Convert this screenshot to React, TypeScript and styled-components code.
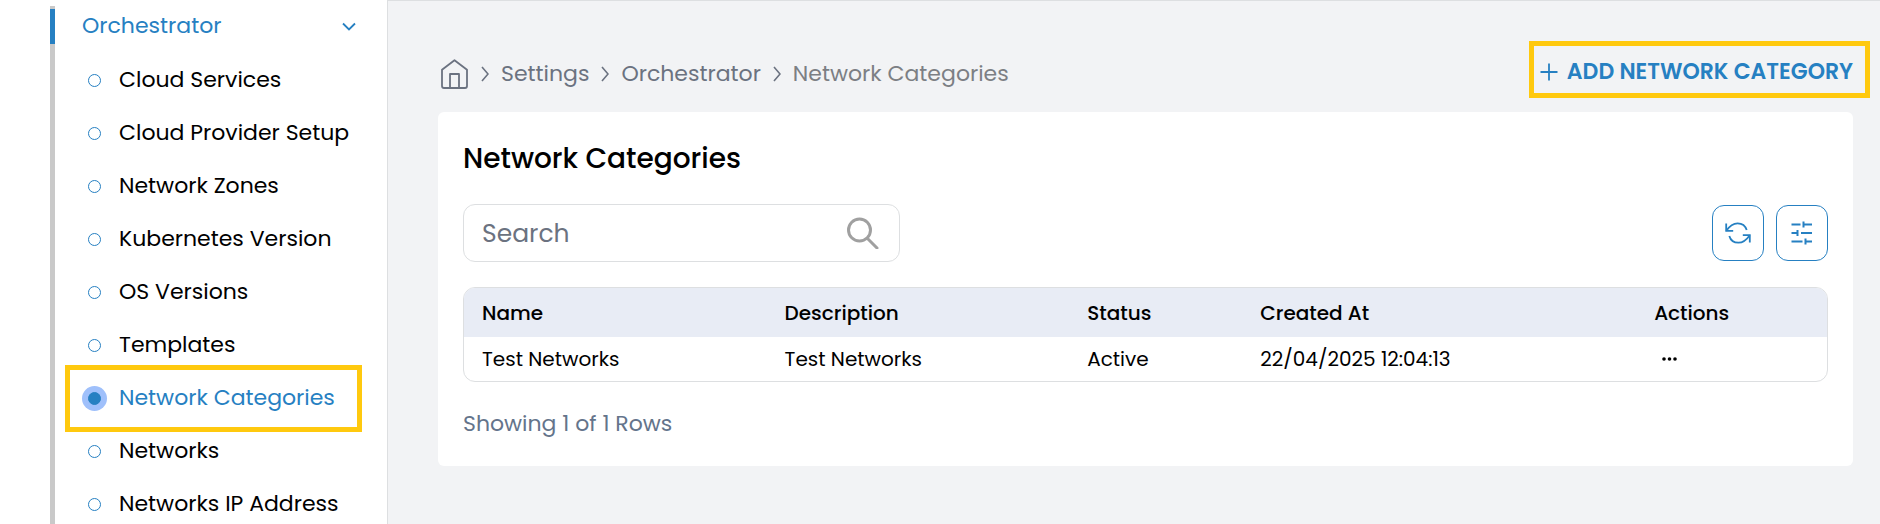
import React from "react";
import styled, { createGlobalStyle, css } from "styled-components";

const blue = "#2680c2";
const slate = "#6b7280";
const line = "#dddfe1";
const marker = "#ffc90e";

const GlobalStyle = createGlobalStyle`
  *, *::before, *::after { box-sizing: border-box; }
  body {
    margin: 0;
    background: #fff;
    color: #000;
    font-family: Poppins, Inter, "Liberation Sans", sans-serif;
    font-size: 22px;
    line-height: 26px;
  }
  a { color: inherit; text-decoration: none; }
  button, input { font: inherit; color: inherit; }
  button { padding: 0; border: 0; background: none; cursor: pointer; }
  svg { display: block; flex: none; fill: none; stroke: currentColor; }
`;

const Shell = styled.div`
  display: flex;
  min-height: 100vh;
`;

const Sidebar = styled.aside`
  display: flex;
  flex: none;
  width: 388px;
  padding: 6px 31px 0 50px;
  border-right: 1px solid ${line};
`;

const Rail = styled.div`
  flex: none;
  width: 5px;
  padding-top: 3px;
  background: #c9c9c9;
`;

const RailThumb = styled.div`
  height: 35px;
  background: ${blue};
`;

const Nav = styled.nav`
  flex: 1;
  padding: 7px 0 0 27px;
`;

const GroupToggle = styled.button`
  display: flex;
  align-items: center;
  justify-content: space-between;
  width: 100%;
  color: ${blue};
`;

const NavList = styled.ul`
  display: flex;
  flex-direction: column;
  gap: 27px;
  margin: 28px 0 0;
  padding: 0;
  list-style: none;
`;

const outlined = css`
  &::after {
    content: "";
    position: absolute;
    inset: -20px 6px -21px -17px;
    border: 5px solid ${marker};
    pointer-events: none;
  }
`;

const NavItem = styled.li<{ $active?: boolean }>`
  position: relative;
  margin-right: -12px;
  ${(p) => p.$active && outlined}
`;

const NavLink = styled.a<{ $active?: boolean }>`
  display: flex;
  align-items: center;
  gap: 12px;
  white-space: nowrap;
  color: ${(p) => (p.$active ? blue : "#000")};
`;

const Bullet = styled.span<{ $active?: boolean }>`
  flex: none;
  width: 13px;
  height: 13px;
  margin: 0 6px;
  border: 1px solid ${blue};
  border-radius: 50%;
  ${(p) =>
    p.$active &&
    css`
      background: ${blue};
      box-shadow: 0 0 0 6px #9fc0fb;
    `}
`;

const Main = styled.main`
  flex: 1;
  min-width: 0;
  padding: 40px 27px 58px 50px;
  border-top: 1px solid ${line};
  background: #f2f3f5;
`;

const TopBar = styled.header`
  display: flex;
  align-items: flex-start;
  justify-content: space-between;
  height: 71px;
`;

const Breadcrumbs = styled.nav`
  display: flex;
  align-items: center;
  gap: 12px;
  padding: 18px 0 0 3px;
  color: ${slate};
`;

const Current = styled.span`
  color: #7c7f84;
`;

const AddButton = styled.button`
  display: flex;
  align-items: center;
  gap: 9px;
  height: 57px;
  margin-right: -17px;
  padding: 4px 12px 0 6px;
  border: 5px solid ${marker};
  color: ${blue};
  font-weight: 600;
  white-space: nowrap;
`;

const Card = styled.section`
  padding: 29px 25px 29px;
  border-radius: 6px;
  background: #fff;
`;

const Title = styled.h1`
  margin: 0;
  font-size: 28px;
  line-height: 36px;
  font-weight: 500;
`;

const Toolbar = styled.div`
  display: flex;
  align-items: center;
  justify-content: space-between;
  margin: 27px 0 25px;
`;

const SearchBox = styled.label`
  display: flex;
  align-items: center;
  width: 32%;
  height: 58px;
  padding: 0 20px 0 18px;
  border: 1px solid ${line};
  border-radius: 12px;
  color: #a0a0a0;
`;

const SearchInput = styled.input`
  flex: 1;
  min-width: 0;
  padding: 2px 0 0;
  border: 0;
  outline: 0;
  background: none;
  color: #000;
  font-size: 25px;
  line-height: 36px;
  &::placeholder { color: ${slate}; opacity: 1; }
`;

const ToolButtons = styled.div`
  display: flex;
  gap: 12px;
`;

const ToolButton = styled.button`
  display: grid;
  place-items: center;
  width: 52px;
  height: 56px;
  border: 1px solid ${blue};
  border-radius: 12px;
  color: ${blue};
`;

const TableFrame = styled.div`
  overflow: hidden;
  border: 1px solid ${line};
  border-radius: 12px;
`;

const Table = styled.table`
  width: 100%;
  table-layout: fixed;
  border-collapse: collapse;
  font-size: 20px;
  text-align: left;
  white-space: nowrap;
`;

const HeadCell = styled.th<{ $share: string }>`
  width: ${(p) => p.$share};
  height: 49px;
  padding: 0 0 0 18px;
  background: #e8ecf5;
  font-weight: 500;
`;

const Cell = styled.td`
  height: 44px;
  padding: 0 0 0 18px;
`;

const MoreButton = styled.button`
  display: block;
  padding: 8px;
`;

const RowCount = styled.p`
  margin: 29px 0 0;
  color: #64748b;
`;

const HomeIcon = () => (
  <svg width="28" height="30" viewBox="0 0 28 30" stroke="#868686" strokeWidth="1.8" strokeLinejoin="round">
    <path d="M1 10.8 13.5 1.2 26 10.8V27q0 2-2 2H3q-2 0-2-2Z" />
    <path d="M9 29V15h9v14" />
  </svg>
);

const Separator = () => (
  <svg width="8" height="16" viewBox="0 0 8 16" strokeWidth="1.6">
    <path d="M1 1 7 8 1 15" />
  </svg>
);

const ChevronDown = () => (
  <svg width="14" height="10" viewBox="0 0 14 10" strokeWidth="1.8">
    <path d="M1 2.5l6 6 6-6" />
  </svg>
);

const PlusIcon = () => (
  <svg width="18" height="18" viewBox="0 0 18 18" strokeWidth="1.8">
    <path d="M9 .5v17M.5 9h17" />
  </svg>
);

const SearchIcon = () => (
  <svg width="32" height="32" viewBox="0 0 32 32" strokeWidth="3" strokeLinecap="round">
    <circle cx="12.5" cy="13" r="11" />
    <path d="M20.5 21.5 30 31" />
  </svg>
);

const RefreshIcon = () => (
  <svg width="26" height="22" viewBox="0 0 26 22" strokeWidth="1.8">
    <path d="M1.2 8.8C4.4 4.2 8 1.3 12.6 1.3c4.2 0 7.8 2.4 9.1 6.8" />
    <path d="M1.2 1.5v7.3h7" />
    <path d="M24.8 13.2c-3.2 4.6-6.8 7.5-11.4 7.5-4.2 0-7.8-2.4-9.1-6.8" />
    <path d="M24.8 20.5v-7.300h-7" />
  </svg>
);

const TuneIcon = () => (
  <svg width="22" height="24" viewBox="0 0 22 24" strokeWidth="2">
    <path d="M.5 3.5h9M12.5 3.5H21M.5 12h6M10 12h11M.5 20.5h11M14.5 20.5H21" />
    <path d="M12.5.5v6M6.500 9v6M14.500 17.500v6" />
  </svg>
);

const DotsIcon = () => (
  <svg width="15" height="4" viewBox="0 0 15 4">
    <g fill="currentColor" stroke="none">
      <circle cx="2" cy="2" r="1.8" />
      <circle cx="7.5" cy="2" r="1.8" />
      <circle cx="13" cy="2" r="1.8" />
    </g>
  </svg>
);

const items = [
  "Cloud Services",
  "Cloud Provider Setup",
  "Network Zones",
  "Kubernetes Version",
  "OS Versions",
  "Templates",
  "Network Categories",
  "Networks",
  "Networks IP Address",
];

const columns = [
  { label: "Name", share: "22.2%" },
  { label: "Description", share: "22.2%" },
  { label: "Status", share: "12.7%" },
  { label: "Created At", share: "28.9%" },
  { label: "Actions", share: "14%" },
];

const rows = [
  { name: "Test Networks", description: "Test Networks", status: "Active", created: "22/04/2025 12:04:13" },
];

export default function App() {
  const active = "Network Categories";
  return (
    <>
      <GlobalStyle />
      <Shell>
        <Sidebar>
          <Rail>
            <RailThumb />
          </Rail>
          <Nav aria-label="Settings">
            <GroupToggle type="button" aria-expanded="true">
              Orchestrator
              <ChevronDown />
            </GroupToggle>
            <NavList>
              {items.map((item) => (
                <NavItem key={item} $active={item === active}>
                  <NavLink href="#" $active={item === active}>
                    <Bullet $active={item === active} />
                    {item}
                  </NavLink>
                </NavItem>
              ))}
            </NavList>
          </Nav>
        </Sidebar>
        <Main>
          <TopBar>
            <Breadcrumbs aria-label="Breadcrumb">
              <a href="#" aria-label="Home">
                <HomeIcon />
              </a>
              <Separator />
              <a href="#">Settings</a>
              <Separator />
              <a href="#">Orchestrator</a>
              <Separator />
              <Current aria-current="page">Network Categories</Current>
            </Breadcrumbs>
            <AddButton type="button">
              <PlusIcon />
              ADD NETWORK CATEGORY
            </AddButton>
          </TopBar>
          <Card>
            <Title>Network Categories</Title>
            <Toolbar>
              <SearchBox>
                <SearchInput type="text" placeholder="Search" aria-label="Search" />
                <SearchIcon />
              </SearchBox>
              <ToolButtons>
                <ToolButton type="button" aria-label="Refresh">
                  <RefreshIcon />
                </ToolButton>
                <ToolButton type="button" aria-label="Filter columns">
                  <TuneIcon />
                </ToolButton>
              </ToolButtons>
            </Toolbar>
            <TableFrame>
              <Table>
                <thead>
                  <tr>
                    {columns.map((c) => (
                      <HeadCell key={c.label} scope="col" $share={c.share}>
                        {c.label}
                      </HeadCell>
                    ))}
                  </tr>
                </thead>
                <tbody>
                  {rows.map((r) => (
                    <tr key={r.name}>
                      <Cell>{r.name}</Cell>
                      <Cell>{r.description}</Cell>
                      <Cell>{r.status}</Cell>
                      <Cell>{r.created}</Cell>
                      <Cell>
                        <MoreButton type="button" aria-label="Row actions">
                          <DotsIcon />
                        </MoreButton>
                      </Cell>
                    </tr>
                  ))}
                </tbody>
              </Table>
            </TableFrame>
            <RowCount>Showing 1 of 1 Rows</RowCount>
          </Card>
        </Main>
      </Shell>
    </>
  );
}
